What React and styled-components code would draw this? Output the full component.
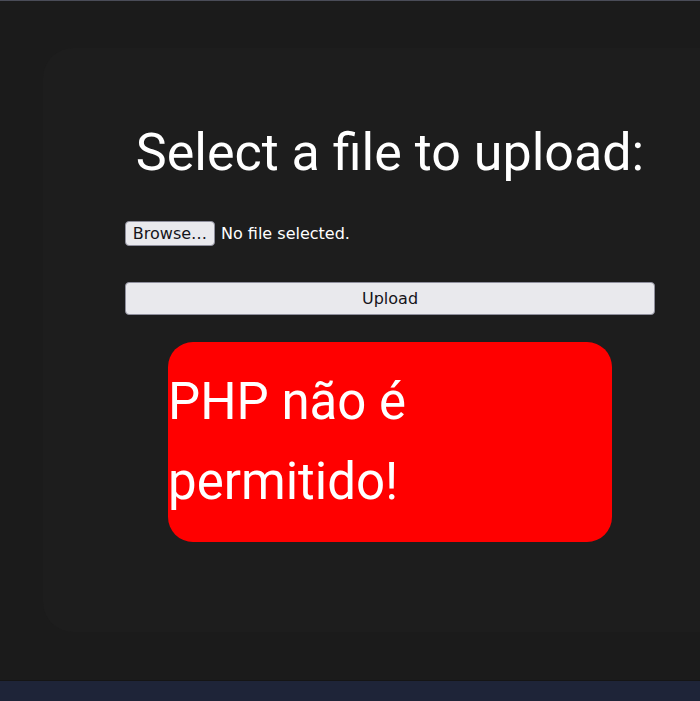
import React from 'react';
import styled, { createGlobalStyle } from 'styled-components';

const GlobalStyle = createGlobalStyle`
  html, body {
    margin: 0;
    padding: 0;
    background: #1b1b1b;
    overflow: hidden;
  }
  body {
    font-family: Roboto, "Open Sans", sans-serif;
  }
`;

export default function App() {
  return (
    <Page>
      <GlobalStyle />
      <Main>
        <Card>
          <Title>Select a file to upload:</Title>
          <FileRow>
            <BrowseButton type="button">Browse…</BrowseButton>
            <FileName>No file selected.</FileName>
          </FileRow>
          <UploadButton type="button">Upload</UploadButton>
          <ErrorBox>PHP não é permitido!</ErrorBox>
        </Card>
      </Main>
      <Footer />
    </Page>
  );
}

// Styled components
const Page = styled.div`
  display: flex;
  flex-direction: column;
  width: 700px;
  height: 701px;
  box-sizing: border-box;
  border-top: 1px solid #4a4c58;
  overflow: hidden;
`;

const Main = styled.main`
  flex: 1;
  padding: 47px 0 0 43px;
`;

const Card = styled.section`
  display: flex;
  flex-direction: column;
  align-items: flex-start;
  width: 694px;
  height: 584px;
  box-sizing: border-box;
  padding: 70px 82px 0;
  background: #1d1d1d;
  border-radius: 30px;
`;

const Title = styled.h1`
  align-self: center;
  margin: 0;
  font-size: 52px;
  font-weight: 400;
  line-height: 70px;
  color: #fff;
`;

const FileRow = styled.div`
  display: flex;
  align-items: center;
  gap: 6px;
  margin-top: 33px;
`;

const FormButton = styled.button`
  box-sizing: border-box;
  background: #e9e9ed;
  border: 1px solid #8f8f9d;
  border-radius: 4px;
  color: #15141a;
  font-family: "DejaVu Sans", sans-serif;
  font-size: 16px;
  padding: 0;
`;

const BrowseButton = styled(FormButton)`
  width: 90px;
  height: 25px;
`;

const FileName = styled.span`
  color: #fff;
  font-family: "DejaVu Sans", sans-serif;
  font-size: 16px;
`;

const UploadButton = styled(FormButton)`
  width: 100%;
  height: 33px;
  margin-top: 36px;
`;

const ErrorBox = styled.div`
  align-self: center;
  width: 444px;
  height: 200px;
  box-sizing: border-box;
  margin-top: 27px;
  padding: 20px 0;
  background: #ff0000;
  border-radius: 25px;
  color: #fff;
  font-size: 51px;
  line-height: 80px;
`;

const Footer = styled.footer`
  height: 21px;
  box-sizing: border-box;
  background: #1e2438;
  border-top: 1px solid #151515;
`;
